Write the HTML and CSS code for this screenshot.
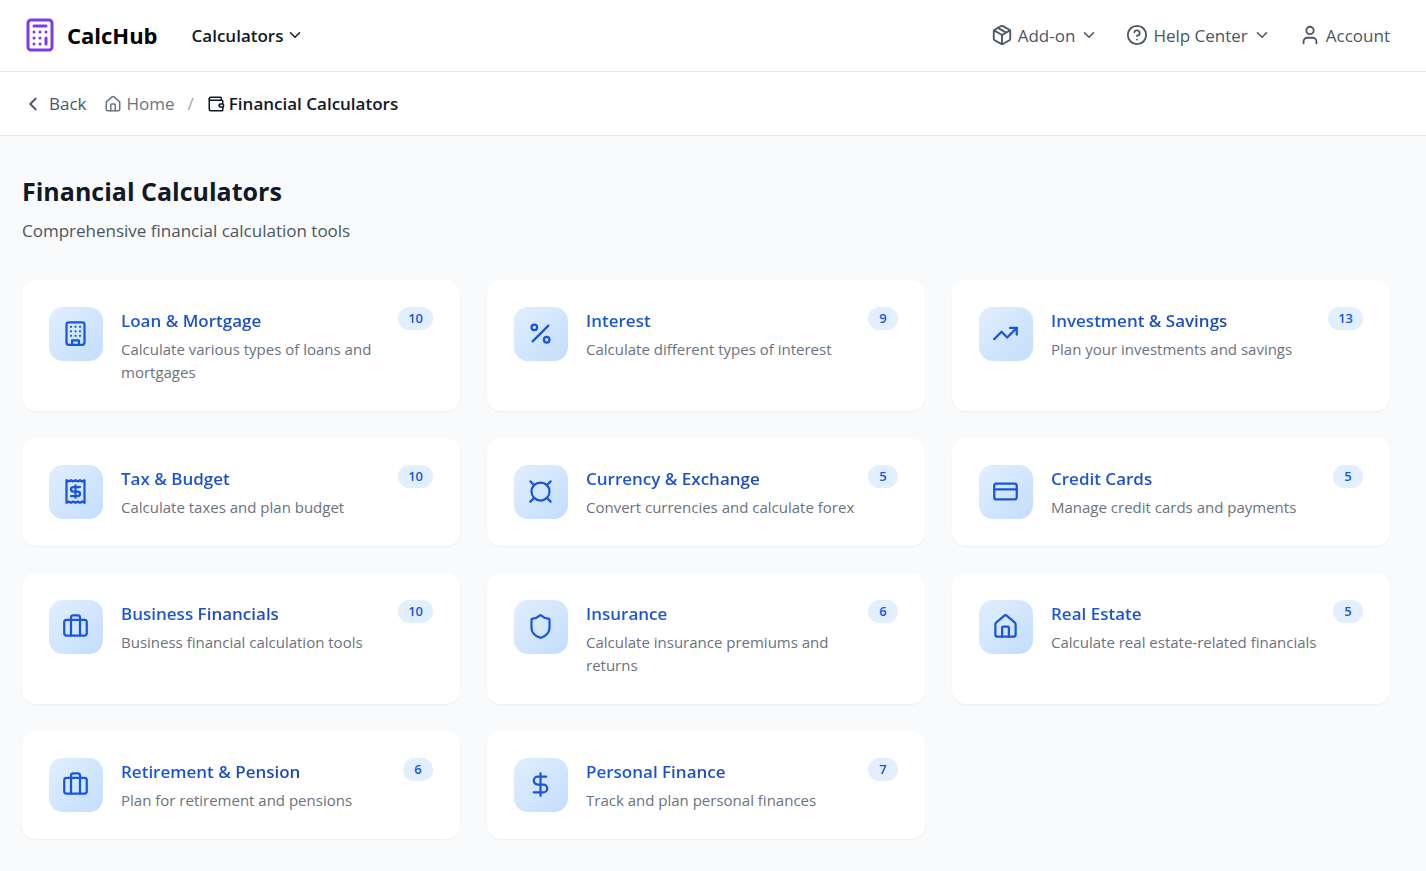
FILE: index.html
```html
<!DOCTYPE html>
<html lang="en">
<head>
<meta charset="utf-8">
<meta name="viewport" content="width=device-width, initial-scale=1">
<title>Financial Calculators - CalcHub</title>
<link rel="stylesheet" href="styles.css">
</head>
<body>
<header class="topbar">
  <a class="brand" href="#">
    <svg class="icon brand-icon" viewBox="0 0 24 24" aria-hidden="true"><rect width="16" height="20" x="4" y="2" rx="2"/><path d="M8 6h8M16 14v4M16 10h.01M12 10h.01M8 10h.01M12 14h.01M8 14h.01M12 18h.01M8 18h.01"/></svg>
    <span>CalcHub</span>
  </a>
  <button class="menu menu-main" type="button">Calculators <svg class="icon icon-sm" viewBox="0 0 24 24" aria-hidden="true"><path d="m6 9 6 6 6-6"/></svg></button>
  <nav class="menus" aria-label="Account and help">
    <button class="menu" type="button"><svg class="icon icon-md" viewBox="0 0 24 24" aria-hidden="true"><path d="M11 21.73a2 2 0 0 0 2 0l7-4A2 2 0 0 0 21 16V8a2 2 0 0 0-1-1.73l-7-4a2 2 0 0 0-2 0l-7 4A2 2 0 0 0 3 8v8a2 2 0 0 0 1 1.73zM12 22V12"/><path d="M3.29 7 12 12l8.71-5M7.5 4.27l9 5.15"/></svg>Add-on <svg class="icon icon-sm" viewBox="0 0 24 24" aria-hidden="true"><path d="m6 9 6 6 6-6"/></svg></button>
    <button class="menu" type="button"><svg class="icon icon-md" viewBox="0 0 24 24" aria-hidden="true"><circle cx="12" cy="12" r="10"/><path d="M9.09 9a3 3 0 0 1 5.83 1c0 2-3 3-3 3M12 17h.01"/></svg>Help Center <svg class="icon icon-sm" viewBox="0 0 24 24" aria-hidden="true"><path d="m6 9 6 6 6-6"/></svg></button>
    <a class="menu" href="#"><svg class="icon icon-md" viewBox="0 0 24 24" aria-hidden="true"><path d="M19 21v-2a4 4 0 0 0-4-4H9a4 4 0 0 0-4 4v2"/><circle cx="12" cy="7" r="4"/></svg>Account</a>
  </nav>
</header>

<nav class="crumbs" aria-label="Breadcrumb">
  <a class="crumb crumb-back" href="#"><svg class="icon icon-md" viewBox="0 0 24 24" aria-hidden="true"><path d="m15 18-6-6 6-6"/></svg>Back</a>
  <a class="crumb crumb-home" href="#"><svg class="icon icon-sm" viewBox="0 0 24 24" aria-hidden="true"><path d="M15 21v-8a1 1 0 0 0-1-1h-4a1 1 0 0 0-1 1v8"/><path d="M3 10a2 2 0 0 1 .709-1.528l7-5.999a2 2 0 0 1 2.582 0l7 5.999A2 2 0 0 1 21 10v9a2 2 0 0 1-2 2H5a2 2 0 0 1-2-2z"/></svg>Home</a>
  <span class="crumb-sep" aria-hidden="true">/</span>
  <span class="crumb crumb-current" aria-current="page"><svg class="icon icon-sm" viewBox="0 0 24 24" aria-hidden="true"><path d="M17 14h.01M19 7V4a1 1 0 0 0-1-1H5a2 2 0 0 0 0 4h15a1 1 0 0 1 1 1v4h-3a2 2 0 0 0 0 4h3a1 1 0 0 0 1-1v-2a1 1 0 0 0-1-1"/><path d="M3 5v14a2 2 0 0 0 2 2h15a1 1 0 0 0 1-1v-4"/></svg>Financial Calculators</span>
</nav>

<main class="page">
  <h1 class="page-title">Financial Calculators</h1>
  <p class="page-lead">Comprehensive financial calculation tools</p>

  <div class="cards">
    <a class="card" href="#">
      <span class="tile"><svg class="icon icon-lg" viewBox="0 0 24 24" aria-hidden="true"><rect width="16" height="20" x="4" y="2" rx="2"/><path d="M9 22v-4h6v4M8 6h.01M16 6h.01M12 6h.01M12 10h.01M12 14h.01M16 10h.01M16 14h.01M8 10h.01M8 14h.01"/></svg></span>
      <div class="card-body"><h2 class="card-title">Loan &amp; Mortgage</h2><p class="card-text">Calculate various types of loans and mortgages</p></div>
      <span class="badge">10</span>
    </a>
    <a class="card" href="#">
      <span class="tile"><svg class="icon icon-lg" viewBox="0 0 24 24" aria-hidden="true"><path d="M19 5 5 19"/><circle cx="6.5" cy="6.5" r="2.5"/><circle cx="17.5" cy="17.5" r="2.5"/></svg></span>
      <div class="card-body"><h2 class="card-title">Interest</h2><p class="card-text">Calculate different types of interest</p></div>
      <span class="badge">9</span>
    </a>
    <a class="card" href="#">
      <span class="tile"><svg class="icon icon-lg" viewBox="0 0 24 24" aria-hidden="true"><path d="m22 7-8.5 8.5-5-5L2 17"/><path d="M16 7h6v6"/></svg></span>
      <div class="card-body"><h2 class="card-title">Investment &amp; Savings</h2><p class="card-text">Plan your investments and savings</p></div>
      <span class="badge">13</span>
    </a>
    <a class="card" href="#">
      <span class="tile"><svg class="icon icon-lg" viewBox="0 0 24 24" aria-hidden="true"><path d="M4 2v20l2-1 2 1 2-1 2 1 2-1 2 1 2-1 2 1V2l-2 1-2-1-2 1-2-1-2 1-2-1-2 1Z"/><path d="M16 8h-6a2 2 0 1 0 0 4h4a2 2 0 1 1 0 4H8M12 17.5v-11"/></svg></span>
      <div class="card-body"><h2 class="card-title">Tax &amp; Budget</h2><p class="card-text">Calculate taxes and plan budget</p></div>
      <span class="badge">10</span>
    </a>
    <a class="card" href="#">
      <span class="tile"><svg class="icon icon-lg" viewBox="0 0 24 24" aria-hidden="true"><circle cx="12" cy="12" r="8"/><path d="m3 3 3 3M21 3l-3 3M3 21l3-3M21 21l-3-3"/></svg></span>
      <div class="card-body"><h2 class="card-title">Currency &amp; Exchange</h2><p class="card-text">Convert currencies and calculate forex</p></div>
      <span class="badge">5</span>
    </a>
    <a class="card" href="#">
      <span class="tile"><svg class="icon icon-lg" viewBox="0 0 24 24" aria-hidden="true"><rect width="20" height="14" x="2" y="5" rx="2"/><path d="M2 10h20"/></svg></span>
      <div class="card-body"><h2 class="card-title">Credit Cards</h2><p class="card-text">Manage credit cards and payments</p></div>
      <span class="badge">5</span>
    </a>
    <a class="card" href="#">
      <span class="tile"><svg class="icon icon-lg" viewBox="0 0 24 24" aria-hidden="true"><path d="M16 20V4a2 2 0 0 0-2-2h-4a2 2 0 0 0-2 2v16"/><rect width="20" height="14" x="2" y="6" rx="2"/></svg></span>
      <div class="card-body"><h2 class="card-title">Business Financials</h2><p class="card-text">Business financial calculation tools</p></div>
      <span class="badge">10</span>
    </a>
    <a class="card" href="#">
      <span class="tile"><svg class="icon icon-lg" viewBox="0 0 24 24" aria-hidden="true"><path d="M20 13c0 5-3.5 7.5-7.66 8.95a1 1 0 0 1-.67-.01C7.5 20.5 4 18 4 13V6a1 1 0 0 1 1-1c2 0 4.5-1.2 6.24-2.72a1.17 1.17 0 0 1 1.52 0C14.51 3.81 17 5 19 5a1 1 0 0 1 1 1z"/></svg></span>
      <div class="card-body"><h2 class="card-title">Insurance</h2><p class="card-text">Calculate insurance premiums and returns</p></div>
      <span class="badge">6</span>
    </a>
    <a class="card" href="#">
      <span class="tile"><svg class="icon icon-lg" viewBox="0 0 24 24" aria-hidden="true"><path d="M15 21v-8a1 1 0 0 0-1-1h-4a1 1 0 0 0-1 1v8"/><path d="M3 10a2 2 0 0 1 .709-1.528l7-5.999a2 2 0 0 1 2.582 0l7 5.999A2 2 0 0 1 21 10v9a2 2 0 0 1-2 2H5a2 2 0 0 1-2-2z"/></svg></span>
      <div class="card-body"><h2 class="card-title">Real Estate</h2><p class="card-text">Calculate real estate-related financials</p></div>
      <span class="badge">5</span>
    </a>
    <a class="card" href="#">
      <span class="tile"><svg class="icon icon-lg" viewBox="0 0 24 24" aria-hidden="true"><path d="M16 20V4a2 2 0 0 0-2-2h-4a2 2 0 0 0-2 2v16"/><rect width="20" height="14" x="2" y="6" rx="2"/></svg></span>
      <div class="card-body"><h2 class="card-title">Retirement &amp; Pension</h2><p class="card-text">Plan for retirement and pensions</p></div>
      <span class="badge">6</span>
    </a>
    <a class="card" href="#">
      <span class="tile"><svg class="icon icon-lg" viewBox="0 0 24 24" aria-hidden="true"><path d="M12 2v20M17 5H9.500a3.500 3.500 0 0 0 0 7h5a3.500 3.500 0 0 1 0 7H6"/></svg></span>
      <div class="card-body"><h2 class="card-title">Personal Finance</h2><p class="card-text">Track and plan personal finances</p></div>
      <span class="badge">7</span>
    </a>
  </div>
</main>
</body>
</html>
```

FILE: styles.css
```css
*,
*::before,
*::after {
  box-sizing: border-box;
}

body {
  margin: 0;
  background: #f9fafb;
  color: #111827;
  font-family: "Segoe UI", "Open Sans", "Noto Sans", sans-serif;
  font-size: 17px;
  line-height: 27px;
}

h1,
h2,
p {
  margin: 0;
}

a {
  color: inherit;
  text-decoration: none;
}

.icon {
  flex: none;
  fill: none;
  stroke: currentColor;
  stroke-width: 2;
  stroke-linecap: round;
  stroke-linejoin: round;
}

.icon-sm {
  width: 18px;
  height: 18px;
}

.icon-md {
  width: 22px;
  height: 22px;
}

.icon-lg {
  width: 27px;
  height: 27px;
}

/* Top bar */

.topbar {
  display: flex;
  align-items: center;
  padding: 17px 36px 18px 22px;
  background: #fff;
  border-bottom: 1px solid #e5e7eb;
}

.brand {
  display: flex;
  align-items: center;
  gap: 9px;
  margin-right: 34px;
  color: #000;
  font-size: 22px;
  font-weight: 700;
}

.brand-icon {
  width: 36px;
  height: 36px;
  color: #7c3aed;
}

.menu {
  display: flex;
  align-items: center;
  gap: 5px;
  padding: 0;
  border: 0;
  background: none;
  color: #4b5563;
  font: inherit;
  cursor: pointer;
}

.menu-main {
  gap: 3px;
  color: #111827;
  font-weight: 600;
}

.menus {
  display: flex;
  gap: 28px;
  margin-left: auto;
}

/* Breadcrumb */

.crumbs {
  display: flex;
  align-items: center;
  padding: 18px 36px 18px 22px;
  background: #fff;
  border-bottom: 1px solid #e5e7eb;
}

.crumb {
  display: flex;
  align-items: center;
  gap: 5px;
}

.crumb-back {
  margin-right: 17px;
  color: #4b5563;
}

.crumb-home {
  color: #6b7280;
}

.crumb-sep {
  margin: 0 13px;
  color: #9ca3af;
}

.crumb-current {
  gap: 4px;
  font-weight: 600;
}

/* Page */

.page {
  padding: 36px 36px 32px 22px;
}

.page-title {
  margin-bottom: 7px;
  font-size: 25px;
  font-weight: 700;
  line-height: 38px;
}

.page-lead {
  margin-bottom: 36px;
  color: #4b5563;
}

.cards {
  display: grid;
  grid-template-columns: repeat(3, minmax(0, 1fr));
  gap: 27px;
}

.card {
  display: flex;
  align-items: flex-start;
  padding: 27px;
  border-radius: 14px;
  background: #fff;
  box-shadow: 0 1px 2px rgba(0, 0, 0, 0.05);
}

.tile {
  display: flex;
  flex: none;
  align-items: flex-start;
  width: 54px;
  height: 54px;
  margin-right: 18px;
  padding: 13px;
  border-radius: 14px;
  background: linear-gradient(to bottom right, #e1effe, #c3ddfd);
  color: #1a56db;
}

.card-body {
  flex: 1;
  min-width: 0;
  margin-right: 12px;
}

.card-title {
  margin-bottom: 4px;
  background: linear-gradient(to right, #1a56db, #1e429f);
  background-clip: text;
  color: transparent;
  font-size: 17px;
  font-weight: 600;
  line-height: 27px;
}

.card-text {
  color: #6b7280;
  font-size: 15px;
  line-height: 23px;
}

.badge {
  flex: none;
  min-width: 30px;
  padding: 0 10px;
  border-radius: 12px;
  background: #e1effe;
  color: #1a56db;
  font-size: 13px;
  font-weight: 600;
  line-height: 23px;
  text-align: center;
}

@media (max-width: 1000px) {
  .cards {
    grid-template-columns: repeat(2, minmax(0, 1fr));
  }
}

@media (max-width: 680px) {
  .cards {
    grid-template-columns: minmax(0, 1fr);
  }
}
```
